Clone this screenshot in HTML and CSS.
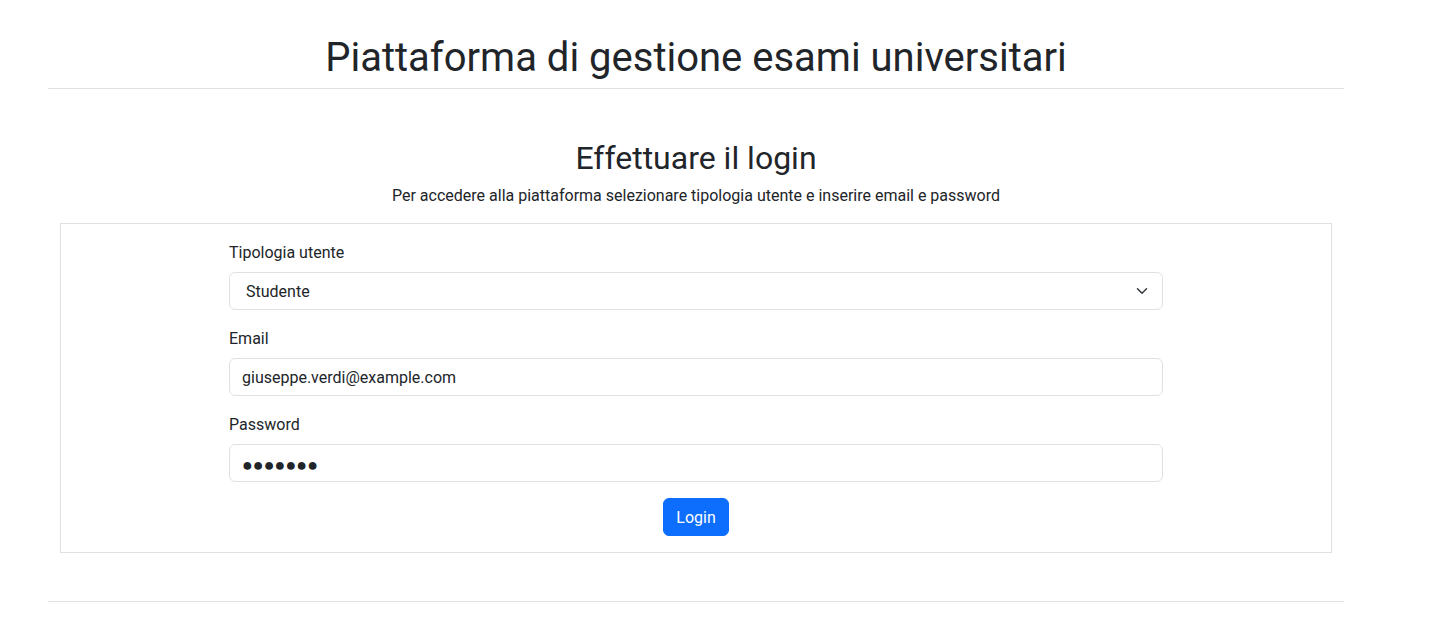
FILE: index.html
```html
<!DOCTYPE html>
<html lang="it">
<head>
<meta charset="utf-8">
<title>Login</title>
<link rel="stylesheet" href="styles.css">
</head>
<body>
<div class="page">
  <header class="top">
    <h1 class="main-title">Piattaforma di gestione esami universitari</h1>
  </header>
  <hr class="rule">
  <section class="login">
    <h2 class="login-title">Effettuare il login</h2>
    <p class="login-sub">Per accedere alla piattaforma selezionare tipologia utente e inserire email e password</p>
    <div class="card">
      <form class="form">
        <div class="field">
          <label class="label">Tipologia utente</label>
          <div class="select">
            <span>Studente</span>
            <svg class="chev" width="16" height="12" viewBox="0 0 16 16"><path d="M2 5l6 6 6-6" fill="none" stroke="#343a40" stroke-width="2" stroke-linecap="round" stroke-linejoin="round"/></svg>
          </div>
        </div>
        <div class="field">
          <label class="label">Email</label>
          <div class="input">giuseppe.verdi@example.com</div>
        </div>
        <div class="field">
          <label class="label">Password</label>
          <div class="input dots">●●●●●●●</div>
        </div>
        <div class="actions">
          <button type="button" class="btn">Login</button>
        </div>
      </form>
    </div>
  </section>
  <hr class="rule bottom">
</div>
</body>
</html>
```
FILE: styles.css
```css
* { box-sizing: border-box; }
html, body { margin: 0; padding: 0; background: #fff; }
body {
  font-family: Roboto, "Noto Sans", "Liberation Sans", Arial, sans-serif;
  font-size: 16px;
  line-height: 1.5;
  color: #212529;
}
.page {
  width: 1296px;
  margin-left: 48px;
  padding-top: 34px;
}
.top { text-align: center; }
.main-title {
  margin: 0;
  font-size: 40px;
  font-weight: 400;
  line-height: 1.2;
}
.rule {
  border: 0;
  border-top: 1px solid #dee2e6;
  margin: 6px 0 0;
}
.login {
  padding: 0 12px;
  text-align: center;
}
.login-title {
  margin: 50px 0 0;
  font-size: 32px;
  font-weight: 400;
  line-height: 1.2;
}
.login-sub {
  margin: 6px 0 16px;
  padding-top: 1px;
  line-height: 23px;
  font-size: 16px;
}
.card {
  border: 1px solid #dee2e6;
  padding: 16px 168px;
  text-align: left;
}
.field { margin-bottom: 16px; }
.label {
  display: block;
  margin-bottom: 8px;
  padding-top: 1px;
  font-size: 16px;
  line-height: 23px;
}
.select, .input {
  height: 38px;
  border: 1px solid #dee2e6;
  border-radius: 6px;
  padding: 2px 12px 0;
  display: flex;
  align-items: center;
  font-size: 16px;
}
.select { justify-content: space-between; padding-right: 12px; padding-left: 16px; }
.chev { width: 16px; height: 12px; margin-top: -2px; }
.dots { font-size: 18px; letter-spacing: 0; }
.actions { display: flex; justify-content: center; }
.btn {
  background: #0d6efd;
  color: #fff;
  border: 1px solid #0d6efd;
  border-radius: 6px;
  font-family: inherit;
  font-size: 16px;
  line-height: 24px;
  padding: 7px 0 5px;
  height: 38px;
  width: 66px;
}
.bottom { margin-top: 48px; }
```
